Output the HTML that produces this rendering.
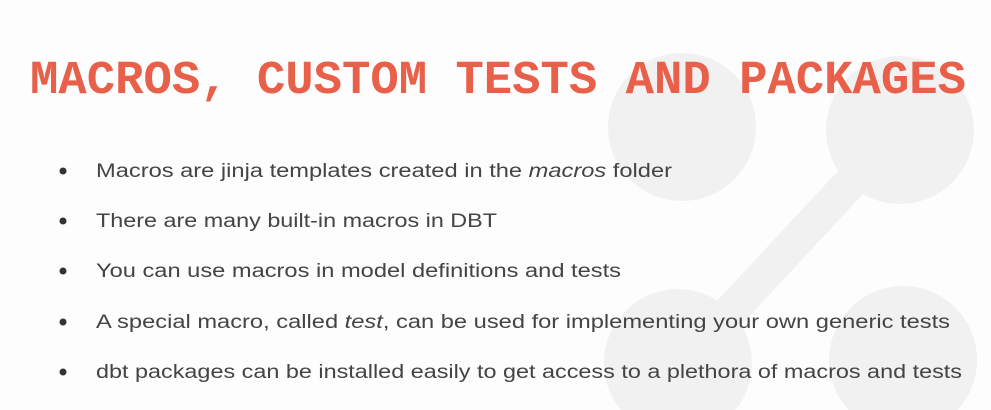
<!DOCTYPE html>
<html><head><meta charset="utf-8"><style>
html,body{margin:0;padding:0;background:#fdfdfd;width:991px;height:410px;overflow:hidden;}
svg{display:block}
</style></head><body>
<svg width="991" height="410" viewBox="0 0 991 410" xmlns="http://www.w3.org/2000/svg">
<rect width="991" height="410" fill="#fdfdfd"/>
<g fill="#f1f1f1">
<circle cx="682" cy="127" r="74"/>
<circle cx="900" cy="130" r="74"/>
<path d="M620.8 410 A74 74 0 1 1 735.2 410 Z"/>
<path d="M848.45 410 A74 74 0 1 1 957.55 410 Z"/>
<line x1="690" y1="355" x2="890" y2="140" stroke="#f1f1f1" stroke-width="34"/>
</g>
<text x="30" y="93" textLength="936" lengthAdjust="spacingAndGlyphs" font-family="Liberation Mono, monospace" font-weight="bold" font-size="47" fill="#e8604a">MACROS, CUSTOM TESTS AND PACKAGES</text>
<g fill="#333">
<circle cx="63" cy="171" r="3.5"/>
<circle cx="63" cy="221" r="3.5"/>
<circle cx="63" cy="271" r="3.5"/>
<circle cx="63" cy="322" r="3.5"/>
<circle cx="63" cy="372" r="3.5"/>
</g>
<g font-family="Liberation Sans, sans-serif" font-size="19" fill="#444">
<text x="96" y="177" textLength="576" lengthAdjust="spacingAndGlyphs">Macros are jinja templates created in the <tspan font-style="italic">macros</tspan> folder</text>
<text x="96" y="227" textLength="401" lengthAdjust="spacingAndGlyphs">There are many built-in macros in DBT</text>
<text x="96" y="277" textLength="525" lengthAdjust="spacingAndGlyphs">You can use macros in model definitions and tests</text>
<text x="96" y="328" textLength="854" lengthAdjust="spacingAndGlyphs">A special macro, called <tspan font-style="italic">test</tspan>, can be used for implementing your own generic tests</text>
<text x="96" y="378" textLength="866" lengthAdjust="spacingAndGlyphs">dbt packages can be installed easily to get access to a plethora of macros and tests</text>
</g>
</svg>
</body></html>
